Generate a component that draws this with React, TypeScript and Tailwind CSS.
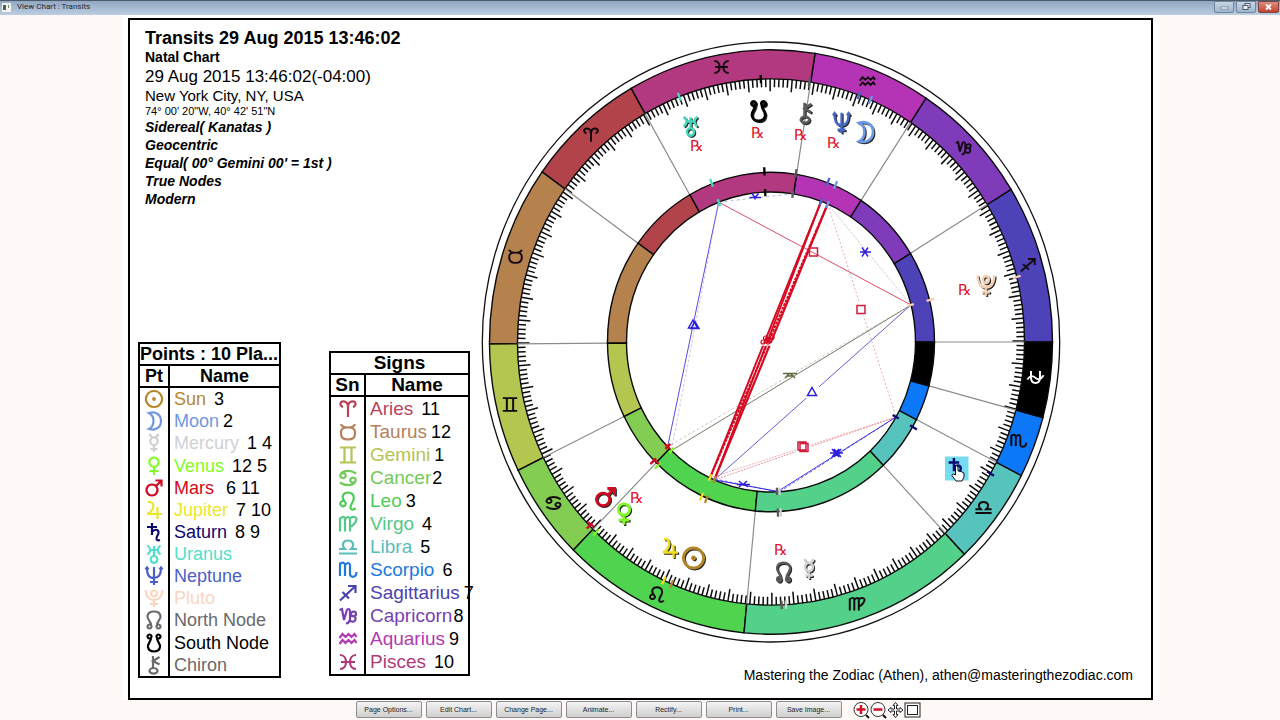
import React from "react";

type GlyphName =
  | "sun" | "moon" | "mercury" | "venus" | "mars" | "jupiter" | "saturn" | "uranus"
  | "neptune" | "pluto" | "north" | "south" | "chiron" | "aries" | "taurus" | "gemini"
  | "cancer" | "leo" | "virgo" | "libra" | "scorpio" | "ophiuchus" | "sagittarius"
  | "capricorn" | "aquarius" | "pisces";

/* Symbol strokes, each on a 20 x 20 grid. */
const GLYPHS: Record<GlyphName, string> = {
  sun: "M10 2a8 8 0 1 0 .01 0M10 9.2a.8.8 0 1 0 .01 0",
  moon: "M5 2C11 5 11 15 5 18C12 20 17 16 17 10C17 4 12 0 5 2Z",
  mercury: "M10 4.5a3.8 3.8 0 1 0 .01 0M5.5 1Q7 4.5 10 4.5T14.500 1M10 12V19M6.500 16H13.500",
  venus: "M10 1.500a4.700 4.700 0 1 0 .01 0M10 11V19M5.500 15H14.500",
  mars: "M8 6.500a5.500 5.500 0 1 0 .01 0M12 8L17.500 2.500M11.500 2.500H17.500V8.500",
  jupiter: "M4 2C8 1 10 4 9 8Q7 13 3 14H18M13.500 7V19",
  saturn: "M8 1V13M3 5H13M8 10C10 7 14 7 14.500 10C15 13 12 14 12.500 17Q13 19 16 18",
  uranus: "M3.500 1.500Q9 6 3.500 10.500M16.500 1.500Q11 6 16.500 10.500M6 6H14M10 2V12M10 12a3.400 3.400 0 1 0 .01 0",
  neptune: "M10 1V19M3 2C3 9 5 12 10 12S17 9 17 2M6 16H14M1.500 3.500L3 1.500L4.500 3.500M15.500 3.500L17 1.500L18.500 3.500",
  pluto: "M10 2.500a3 3 0 1 0 .01 0M1.500 2C2 8 4 12 10 12S18 8 18.500 2M10 12V19M6 16H14",
  north: "M7 15C7 11 3 10 3.500 6C4 3 7 1.500 10 1.500S16 3 16.500 6C17 10 13 11 13 15M5.500 14.500a2 2 0 1 0 .01 0M14.500 14.500a2 2 0 1 0 .01 0",
  south: "M7 5C7 9 3.500 10 4 14C4.500 17 7 18.500 10 18.500S15.500 17 16 14C16.500 10 13 9 13 5M5.500 1.500a2 2 0 1 0 .01 0M14.500 1.500a2 2 0 1 0 .01 0",
  chiron: "M9 1V13M15.500 2L9 6L15.500 9.500M9.500 13a4 2.800 0 1 0 .01 0",
  aries: "M10 18V8C10 2 4 1 2.500 4Q2 7 5 8M10 8C10 2 16 1 17.500 4Q18 7 15 8",
  taurus: "M3 2Q4 5.500 10 5.500T17 2M10 5.500C2.500 5.500 3 9 3 11.500S3.500 17.500 10 17.500S17 14 17 11.500S17.500 5.500 10 5.500",
  gemini: "M2 2.500H18M2 17.500H18M6.500 2.500V17.500M13.500 2.500V17.500",
  cancer: "M18 5.500C13 2 6 2 3 5.500M5 5.200a2.800 2.500 0 1 0 .01 0M2 14.500C7 18 14 18 17 14.500M15 9.600a2.800 2.500 0 1 0 .01 0",
  leo: "M5 10a2.700 2.700 0 1 0 .01 0M6.500 10.500C3 6 5 1.500 10 1.500S17 6 15 10S11 18 14 18.500Q16 19 17.500 17",
  virgo: "M2 17.500V3.500M2 4.500Q6.500 1 7 5V17.500M7 5Q11 1 12 5V17.500M12 4Q18 1.500 18.500 5Q17.500 10.500 12 13",
  libra: "M1 16.500H19M1 12H7C3 8 5 3.500 10 3.500S17 8 13 12H19",
  scorpio: "M2 2.500V16M2 4Q6.500 1 7 5V16M7 5Q11 1 12 5V14C12 18 18.500 18 18.500 12",
  ophiuchus: "M5 3V11Q5 17 10 17T15 11V3M1 13C4 8 7 8 10 11S16 13 19 8",
  sagittarius: "M2 17.500L17.500 3M10 3H17.500V10M4.500 9L11 15.500",
  capricorn: "M1.500 4L4 3L6 14L9 3.500M9 3.500Q12 2 12 6V13Q11.500 17 8 17.500M12 9C14 4 18.500 5 18 8S13 11 12.500 8M12 10Q18 9 17.500 13T12.500 15",
  aquarius: "M1.500 9L4.500 5L7.500 8L10.500 5L13.500 8L16.500 5L18.500 8M1.500 15L4.500 11L7.500 14L10.500 11L13.500 14L16.500 11L18.500 14",
  pisces: "M2 3C10 3 10 17 2 17M18 3C10 3 10 17 18 17M3 10H17",
};

const MARS = "#cf0a20";

function TableGlyph({ name, color }: { name: GlyphName; color: string }) {
  return (
    <svg viewBox="0 0 20 20" className="mx-auto block h-5 w-5" fill="none" stroke={color} strokeWidth={2.2} aria-hidden="true">
      <path d={GLYPHS[name]} />
    </svg>
  );
}

interface Row {
  glyph: GlyphName;
  name: string;
  color: string;
  note?: string;
  noteClass?: string;
}

const POINTS: Row[] = [
  { glyph: "sun", name: "Sun", color: "#b5872b", note: "3", noteClass: "ml-2" },
  { glyph: "moon", name: "Moon", color: "#6f98e0", note: "2", noteClass: "ml-1" },
  { glyph: "mercury", name: "Mercury", color: "#d0d0d4", note: "1 4", noteClass: "ml-2" },
  { glyph: "venus", name: "Venus", color: "#80fb28", note: "12 5", noteClass: "ml-2" },
  { glyph: "mars", name: "Mars", color: MARS, note: "6 11", noteClass: "ml-3" },
  { glyph: "jupiter", name: "Jupiter", color: "#ebe52c", note: "7 10", noteClass: "ml-2" },
  { glyph: "saturn", name: "Saturn", color: "#0d0870", note: "8 9", noteClass: "ml-2" },
  { glyph: "uranus", name: "Uranus", color: "#50dfca" },
  { glyph: "neptune", name: "Neptune", color: "#4c5fc4" },
  { glyph: "pluto", name: "Pluto", color: "#fbd5bf" },
  { glyph: "north", name: "North Node", color: "#6a6a6a" },
  { glyph: "south", name: "South Node", color: "#000000" },
  { glyph: "chiron", name: "Chiron", color: "#6a6a6a" },
];

const SIGNS: Row[] = [
  { glyph: "aries", name: "Aries", color: "#b8445a", note: "11", noteClass: "ml-2" },
  { glyph: "taurus", name: "Taurus", color: "#b5805a", note: "12", noteClass: "ml-1" },
  { glyph: "gemini", name: "Gemini", color: "#b4c455", note: "1", noteClass: "ml-1" },
  { glyph: "cancer", name: "Cancer", color: "#74ca58", note: "2", noteClass: "ml-px" },
  { glyph: "leo", name: "Leo", color: "#4fcc58", note: "3", noteClass: "ml-1" },
  { glyph: "virgo", name: "Virgo", color: "#54c886", note: "4", noteClass: "ml-2" },
  { glyph: "libra", name: "Libra", color: "#5abdbb", note: "5", noteClass: "ml-2" },
  { glyph: "scorpio", name: "Scorpio", color: "#2079dc", note: "6", noteClass: "ml-2" },
  { glyph: "sagittarius", name: "Sagittarius", color: "#4b43b0", note: "7", noteClass: "ml-1" },
  { glyph: "capricorn", name: "Capricorn", color: "#7640b2", note: "8", noteClass: "ml-px" },
  { glyph: "aquarius", name: "Aquarius", color: "#b23ab2", note: "9", noteClass: "ml-1" },
  { glyph: "pisces", name: "Pisces", color: "#b03a78", note: "10", noteClass: "ml-2" },
];

function PointsTable() {
  return (
    <table className="h-[336px] w-[143px] table-fixed border-collapse border-2 border-black text-lg leading-5">
      <colgroup>
        <col className="w-[30px]" />
        <col />
      </colgroup>
      <thead>
        <tr>
          <th colSpan={2} className="border-b-2 border-black p-0 text-left font-bold whitespace-nowrap">
            Points : 10 Pla...
          </th>
        </tr>
        <tr>
          <th className="border-r-2 border-b-2 border-black p-0 font-bold">Pt</th>
          <th className="border-b-2 border-black p-0 font-bold">Name</th>
        </tr>
      </thead>
      <tbody>
        {POINTS.map((r) => (
          <tr key={r.name}>
            <td className="border-r-2 border-black p-0"><TableGlyph name={r.glyph} color={r.color} /></td>
            <td className="p-0 pl-1 whitespace-nowrap">
              <span style={{ color: r.color }}>{r.name}</span>
              {r.note && <span className={r.noteClass}>{r.note}</span>}
            </td>
          </tr>
        ))}
      </tbody>
    </table>
  );
}

function SignsTable() {
  return (
    <table className="mb-[2px] h-[325px] w-[141px] table-fixed border-collapse border-2 border-black text-[19px] leading-5">
      <colgroup>
        <col className="w-[35px]" />
        <col />
      </colgroup>
      <thead>
        <tr>
          <th colSpan={2} className="border-b-2 border-black p-0 font-bold">Signs</th>
        </tr>
        <tr>
          <th className="border-r-2 border-b-2 border-black p-0 font-bold">Sn</th>
          <th className="border-b-2 border-black p-0 font-bold">Name</th>
        </tr>
      </thead>
      <tbody>
        {SIGNS.map((r) => (
          <tr key={r.name}>
            <td className="border-r-2 border-black p-0"><TableGlyph name={r.glyph} color={r.color} /></td>
            <td className="p-0 pl-1 whitespace-nowrap">
              <span style={{ color: r.color }}>{r.name}</span>
              <span className={r.noteClass + " text-lg leading-5"}>{r.note}</span>
            </td>
          </tr>
        ))}
      </tbody>
    </table>
  );
}

/* ---- wheel ---- */

const CX = 771;
const CY = 342;
const ASPECT = 1.038;
const BAND_OUT = 281.5;
const BAND_IN = 253.5;
const RING_OUT = 163.5;
const RING_IN = 144.5;

function pt(r: number, deg: number): [number, number] {
  const a = (deg * Math.PI) / 180;
  return [CX + r * Math.cos(a), CY - ASPECT * r * Math.sin(a)];
}

function radial(r1: number, r2: number, deg: number) {
  const [x1, y1] = pt(r1, deg);
  const [x2, y2] = pt(r2, deg);
  return { x1, y1, x2, y2 };
}

function sector(rOut: number, rIn: number, a0: number, a1: number) {
  const [x0, y0] = pt(rOut, a0);
  const [x1, y1] = pt(rOut, a1);
  const [x2, y2] = pt(rIn, a1);
  const [x3, y3] = pt(rIn, a0);
  return `M${x0} ${y0}A${rOut} ${rOut * ASPECT} 0 0 0 ${x1} ${y1}L${x2} ${y2}A${rIn} ${rIn * ASPECT} 0 0 1 ${x3} ${y3}Z`;
}

interface Sector { sign: GlyphName; from: number; to: number; fill: string; x: number; y: number }

const SECTORS: Sector[] = [
  { sign: "sagittarius", from: 0, to: 31.5, fill: "#4e42b8", x: 1028, y: 265 },
  { sign: "capricorn", from: 31.5, to: 56.6, fill: "#7f3bba", x: 963.5, y: 148 },
  { sign: "aquarius", from: 56.6, to: 81, fill: "#b534b6", x: 867.5, y: 81.5 },
  { sign: "pisces", from: 81, to: 119.8, fill: "#b2387f", x: 721.5, y: 67 },
  { sign: "aries", from: 119.8, to: 144.4, fill: "#b2434b", x: 591, y: 135 },
  { sign: "taurus", from: 144.4, to: 180.4, fill: "#b5814d", x: 515.5, y: 256.5 },
  { sign: "gemini", from: 180.4, to: 206.05, fill: "#b5c650", x: 510, y: 404.5 },
  { sign: "cancer", from: 206.05, to: 225.4, fill: "#83cd52", x: 553.5, y: 503 },
  { sign: "leo", from: 225.4, to: 264.5, fill: "#50d44f", x: 657, y: 594.5 },
  { sign: "virgo", from: 264.5, to: 313.4, fill: "#53d089", x: 857, y: 604 },
  { sign: "libra", from: 313.4, to: 332.8, fill: "#56c3bd", x: 983.5, y: 507.5 },
  { sign: "scorpio", from: 332.8, to: 345, fill: "#0c78f8", x: 1018.5, y: 441 },
  { sign: "ophiuchus", from: 345, to: 360, fill: "#000000", x: 1035.5, y: 377 },
];

interface Body {
  glyph: GlyphName; deg: number; color: string;
  x: number; y: number; w: number; h: number;
  rx?: [number, number];
}

const BODIES: Record<string, Body> = {
  uranus: { glyph: "uranus", deg: 111.2, color: "#45d8ba", x: 690.5, y: 126, w: 21, h: 22, rx: [697, 146] },
  south: { glyph: "south", deg: 92.3, color: "#000000", x: 758.5, y: 111, w: 22, h: 23, rx: [758, 133] },
  chiron: { glyph: "chiron", deg: 81.3, color: "#5c5c5c", x: 805.5, y: 113, w: 21, h: 23, rx: [801, 135] },
  neptune: { glyph: "neptune", deg: 69.7, color: "#4668c4", x: 841.5, y: 123, w: 20, h: 23, rx: [834, 143] },
  moon: { glyph: "moon", deg: 66.9, color: "#6c9ae4", x: 865, y: 132, w: 23, h: 23 },
  pluto: { glyph: "pluto", deg: 14.3, color: "#f5cfb2", x: 986, y: 285, w: 20, h: 24, rx: [965, 290] },
  saturn: { glyph: "saturn", deg: -30, color: "#0d0870", x: 956, y: 468, w: 21, h: 22 },
  north: { glyph: "north", deg: -87.6, color: "#5c5c5c", x: 783.5, y: 572, w: 20, h: 22, rx: [781, 550] },
  mercury: { glyph: "mercury", deg: -86.6, color: "#d2d2d2", x: 809, y: 569, w: 21, h: 22 },
  sun: { glyph: "sun", deg: 246.9, color: "#b5872b", x: 693.500, y: 558, w: 25, h: 25 },
  jupiter: { glyph: "jupiter", deg: 245, color: "#f2dc1e", x: 670, y: 548, w: 20, h: 22 },
  venus: { glyph: "venus", deg: 226.4, color: "#80fb28", x: 624, y: 514, w: 24, h: 24 },
  mars: { glyph: "mars", deg: 224.3, color: MARS, x: 605.500, y: 497, w: 24, h: 23, rx: [637, 498] },
};

interface Aspect { a: string; b: string; color: string; width: number; dash?: string; opacity?: number }

const ASPECTS: Aspect[] = [
  { a: "uranus", b: "pluto", color: "#d8304c", width: 1, opacity: 0.85 },
  { a: "uranus", b: "mars", color: "#3a30d8", width: 1, opacity: 0.85 },
  { a: "uranus", b: "venus", color: "#8f8ad8", width: 1, dash: "3 2", opacity: 0.45 },
  { a: "uranus", b: "chiron", color: "#8f8ad8", width: 1, dash: "3 3", opacity: 0.6 },
  { a: "moon", b: "pluto", color: "#a49ad8", width: 1, dash: "1 1", opacity: 0.7 },
  { a: "moon", b: "saturn", color: "#e08a9a", width: 1, dash: "2 2", opacity: 0.7 },
  { a: "pluto", b: "venus", color: "#76786a", width: 1 },
  { a: "pluto", b: "mars", color: "#a8aa9a", width: 1, dash: "3 2", opacity: 0.6 },
  { a: "pluto", b: "sun", color: "#4a44d0", width: 1, opacity: 0.85 },
  { a: "saturn", b: "sun", color: "#e8808c", width: 1, dash: "2 1", opacity: 0.8 },
  { a: "saturn", b: "jupiter", color: "#e8808c", width: 1, dash: "2 1", opacity: 0.6 },
  { a: "saturn", b: "north", color: "#3028e0", width: 1, opacity: 0.9 },
  { a: "saturn", b: "mercury", color: "#3028e0", width: 1, dash: "3 2", opacity: 0.7 },
  { a: "sun", b: "mercury", color: "#3028e0", width: 1 },
  { a: "jupiter", b: "north", color: "#3028e0", width: 1, dash: "3 2", opacity: 0.7 },
  { a: "neptune", b: "jupiter", color: "#d50a22", width: 2 },
  { a: "neptune", b: "sun", color: "#d50a22", width: 1.8 },
  { a: "moon", b: "jupiter", color: "#d50a22", width: 2, dash: "3 1" },
  { a: "moon", b: "sun", color: "#d50a22", width: 2.2 },
];

function AspectLine({ aspect }: { aspect: Aspect }) {
  const [x1, y1] = pt(RING_IN, BODIES[aspect.a].deg);
  const [x2, y2] = pt(RING_IN, BODIES[aspect.b].deg);
  return (
    <line
      x1={x1} y1={y1} x2={x2} y2={y2}
      stroke={aspect.color} strokeWidth={aspect.width}
      strokeDasharray={aspect.dash} opacity={aspect.opacity ?? 1}
    />
  );
}

function Symbol({ name, x, y, w, h, color, weight }: {
  name: GlyphName; x: number; y: number; w: number; h: number; color: string; weight: number;
}) {
  return (
    <path
      d={GLYPHS[name]}
      transform={`translate(${x - w / 2} ${y - h / 2}) scale(${w / 20} ${h / 20})`}
      fill="none" stroke={color} strokeWidth={weight}
    />
  );
}

function Wheel() {
  const ticks = Array.from({ length: 360 }, (_, i) => i);
  return (
    <svg viewBox="481 40 580 604" className="block w-[580px] shrink-0" role="img" aria-label="Natal chart wheel">
      <ellipse cx={CX} cy={CY} rx={288.700} ry={300} fill="#fff" stroke="#111" strokeWidth={1.300} />
      {SECTORS.map((s) => (
        <path key={s.sign} d={sector(BAND_OUT, BAND_IN, s.from, s.to)} fill={s.fill} stroke="#0a0a0a" strokeWidth={1.400} />
      ))}
      <g stroke="#0c0c0c" strokeWidth={1.500}>
        {ticks.map((i) => (
          <line key={i} {...radial(BAND_IN, i % 5 === 0 ? 241.500 : 245.500, i + 0.2)} />
        ))}
      </g>
      <g stroke="#8c8c8c" strokeWidth={1.200}>
        {SECTORS.map((s) => <line key={s.sign} {...radial(RING_OUT, BAND_IN, s.from)} />)}
      </g>
      {SECTORS.map((s) => (
        <path key={s.sign} d={sector(RING_OUT, RING_IN, s.from, s.to)} fill={s.fill} stroke="#0a0a0a" strokeWidth={1.400} />
      ))}
      {SECTORS.map((s) => (
        <Symbol key={s.sign} name={s.sign} x={s.x} y={s.y} w={18} h={17}
          color={s.sign === "ophiuchus" ? "#fff" : "#120a10"} weight={2.200} />
      ))}

      {ASPECTS.map((a) => <AspectLine key={a.a + a.b} aspect={a} />)}

      <path d="M758 344.500H777" stroke="#fff" strokeWidth={2.500} />
      <g stroke="#d50a22" fill="none" strokeWidth={1.200}>
        <circle cx={763} cy={342} r={2} /><circle cx={765.500} cy={338} r={2} />
        <circle cx={768} cy={342} r={2} /><circle cx={772} cy={337.500} r={2} />
        <path d="M764 341L766 339M768 341L771 338" />
      </g>

      {/* planet marks on the rings */}
      {Object.values(BODIES).map((b) => (
        <g key={b.glyph} stroke={b.color} strokeWidth={2.300}>
          <line {...radial(BAND_IN - 4, BAND_IN + 4, b.deg)} />
          <line {...radial(RING_OUT - 3, RING_OUT + 5, b.deg)} />
          <line {...radial(RING_IN - 4, RING_IN + 3, b.deg)} />
        </g>
      ))}
      <g stroke={MARS} strokeWidth={2.200}>
        <path d="M665 444L670 449M653 459L659 464M588 522L594 527" />
      </g>

      {/* aspect symbols */}
      <g fill="#fff" stroke="none">
        <rect x={855} y={303} width={13} height={13} />
        <rect x={796} y={440} width={15} height={13} />
        <rect x={805} y={386} width={14} height={12} />
      </g>
      <g fill="none" stroke="#d01c38" strokeWidth={1.500}>
        <path d="M809.500 248h8v8h-8zM857 305.500h8v8h-8zM798 442h8v8h-8zM800 443.500h8v8h-8z" />
      </g>
      <g fill="none" stroke="#2d20d8" strokeWidth={1.500}>
        <path d="M812 387.500l4.500 8h-9zM693 320l4.500 8h-9zM695 321.500l4 7h-8z" />
        <path d="M860 252H871M862 247.500L868 256.500M868 247.500L862 256.500" />
        <path d="M830 453H843M832 449L839 457M839 449L832 457M834 449L841 457M841 449L834 457" />
        <path d="M749.500 197.500H761M752 193.500L755 197.500L758.500 193.500M755 197V199.500" />
        <path d="M737 484.500H750M739 481L743 484.500L747 481M742 484L739 487M744 484L748 487" />
      </g>
      <path d="M783 373.500H797M789 374L785 378M791 374L795 378M787 376H793" fill="none" stroke="#5c6840" strokeWidth={1.500} />

      {/* hovered body */}
      <rect x={945} y={456.500} width={23.500} height={24} fill="#76dcf2" />

      {Object.values(BODIES).map((b) => (
        <g key={b.glyph}>
          {b.glyph !== "saturn" && (
            <Symbol name={b.glyph} x={b.x + 1.200} y={b.y + 1.200} w={b.w} h={b.h} color="#2a2a2a" weight={2} />
          )}
          <Symbol name={b.glyph} x={b.x} y={b.y} w={b.w} h={b.h} color={b.color} weight={2.300} />
        </g>
      ))}
      {Object.values(BODIES).map((b) =>
        b.rx ? (
          <text
            key={b.glyph} x={b.rx[0]} y={b.rx[1] + 5} fontSize={15} textAnchor="middle"
            fill="#e0162f" className="font-['DejaVu_Sans',sans-serif]"
          >
            ℞
          </text>
        ) : null,
      )}
      {/* hand pointer */}
      <path
        d="M955.500 466Q957 465 958 467V471L961 471.500L964 473V477L962 481H956L952 475.500Q952 473 955.500 475Z"
        fill="#fff" stroke="#111" strokeWidth={1}
      />
    </svg>
  );
}

const ACTIONS = ["Page Options...", "Edit Chart...", "Change Page...", "Animate...", "Rectify...", "Print...", "Save Image..."];

function Toolbar() {
  return (
    <div className="flex h-5 items-center justify-center gap-[11px] pr-1 pb-px">
      <div className="flex gap-1">
        {ACTIONS.map((label) => (
          <button
            key={label}
            type="button"
            className="h-[17px] w-[66px] rounded-xs border border-[#8d8d8d] bg-linear-to-b from-[#f4f4f4] to-[#cfcfcf] text-[7px] leading-[14px] text-[#1c1c1c]"
          >
            {label}
          </button>
        ))}
      </div>
      <div className="flex items-center">
        <button type="button" aria-label="Zoom in" className="h-[18px] w-[17px]">
          <svg viewBox="0 0 17 18" fill="none"><circle cx="8" cy="8.500" r="7" fill="#fff" stroke="#333" /><path d="M13 14l3 3" stroke="#111" strokeWidth="2" /><path d="M8 4v9M3.500 8.500h9" stroke="#d01028" strokeWidth="2.500" /></svg>
        </button>
        <button type="button" aria-label="Zoom out" className="h-[18px] w-[17px]">
          <svg viewBox="0 0 17 18" fill="none"><circle cx="8" cy="8.500" r="7" fill="#fff" stroke="#333" /><path d="M13 14l3 3" stroke="#111" strokeWidth="2" /><path d="M3.500 8.500h9" stroke="#d01028" strokeWidth="2.500" /></svg>
        </button>
        <button type="button" aria-label="Pan" className="h-[18px] w-[17px]">
          <svg viewBox="0 0 17 18" fill="#fff" stroke="#222" strokeWidth="1"><path d="M8.500 1.500l2.500 3h-1.500v3.500h3.500v-1.500l3 2.500l-3 2.500v-1.500h-3.500v3.500h1.500l-2.500 3l-2.500-3h1.500v-3.500h-3.500v1.500l-3-2.500l3-2.500v1.500h3.500v-3.500h-1.500z" /></svg>
        </button>
        <button type="button" aria-label="Fit page" className="h-[18px] w-[17px]">
          <svg viewBox="0 0 17 18" fill="#fff" stroke="#222"><rect x="1" y="2" width="15" height="14" /><rect x="3.500" y="4.500" width="10" height="9" /></svg>
        </button>
      </div>
    </div>
  );
}

function TitleBar() {
  return (
    <header className="flex h-[15px] items-start justify-between border-t border-[#4d5a6b] bg-linear-to-b from-[#92a8c2] to-[#bccde0]">
      <div className="flex h-3 items-center gap-[6px] pl-[2px]">
        <svg viewBox="0 0 9 9" className="h-[9px] w-[9px]" aria-hidden="true">
          <rect width="9" height="9" fill="#f2f4f2" /><rect x="1" y="2" width="3" height="5" fill="#4e5c62" /><rect x="6" y="2" width="1" height="3" fill="#6a8a6a" />
        </svg>
        <h1 className="font-['Roboto',sans-serif] text-[8px] leading-3 text-[#1c2630]">View Chart : Transits</h1>
      </div>
      <div className="flex gap-[2px] pr-px">
        <button type="button" aria-label="Minimize" className="h-3 w-5 rounded-b-xs border border-[#71859d] bg-linear-to-b from-[#c8d6e6] to-[#9fb4cc]">
          <svg viewBox="0 0 18 10"><rect x="6" y="5" width="7" height="2" fill="#fff" stroke="#5a6878" strokeWidth=".6" /></svg>
        </button>
        <button type="button" aria-label="Restore" className="h-3 w-5 rounded-b-xs border border-[#71859d] bg-linear-to-b from-[#c8d6e6] to-[#9fb4cc]">
          <svg viewBox="0 0 18 10" fill="#eef2f6" stroke="#4e5c6c"><rect x="8" y="1.500" width="5" height="4" /><rect x="6" y="3.500" width="5" height="4" /></svg>
        </button>
        <button type="button" aria-label="Close" className="h-3 w-[21px] rounded-b-xs border border-[#7d4640] bg-linear-to-b from-[#dc8d80] to-[#c2402c]">
          <svg viewBox="0 0 19 10" fill="none"><path d="M7 2.500l5 5M12 2.500l-5 5" stroke="#fff" strokeWidth="1.800" /></svg>
        </button>
      </div>
    </header>
  );
}

export default function App() {
  return (
    <div className="flex min-h-screen flex-col bg-[#fef8f7] font-['Liberation_Sans',Arial,sans-serif] text-black">
      <TitleBar />
      <main className="mr-[121px] ml-[122px] flex flex-1 flex-col bg-white px-[6px] pt-[3px]">
        <div className="flex flex-1 border-2 border-black bg-white">
          <section className="flex w-[351px] shrink-0 flex-col justify-between pt-2 pb-5">
            <div className="pl-[15px] text-sm leading-[18px]">
              <h2 className="text-lg leading-5 font-bold">Transits 29 Aug 2015 13:46:02</h2>
              <p className="leading-[19px] font-bold">Natal Chart</p>
              <p className="text-[17px] leading-5">29 Aug 2015 13:46:02(-04:00)</p>
              <p className="text-[15px] leading-[18px]">New York City, NY, USA</p>
              <p className="text-[11px] leading-[13px]">74° 00' 20"W, 40° 42' 51"N</p>
              <div className="font-bold italic">
                <p>Sidereal( Kanatas )</p>
                <p>Geocentric</p>
                <p>Equal( 00° Gemini 00' = 1st )</p>
                <p>True Nodes</p>
                <p>Modern</p>
              </div>
            </div>
            <div className="flex items-end gap-12 pl-2">
              <PointsTable />
              <SignsTable />
            </div>
          </section>
          <section className="flex flex-1 flex-col justify-between pt-5 pb-[13px]">
            <Wheel />
            <p className="pr-[18px] text-right text-sm leading-5">
              Mastering the Zodiac (Athen), athen@masteringthezodiac.com
            </p>
          </section>
        </div>
      </main>
      <Toolbar />
    </div>
  );
}
